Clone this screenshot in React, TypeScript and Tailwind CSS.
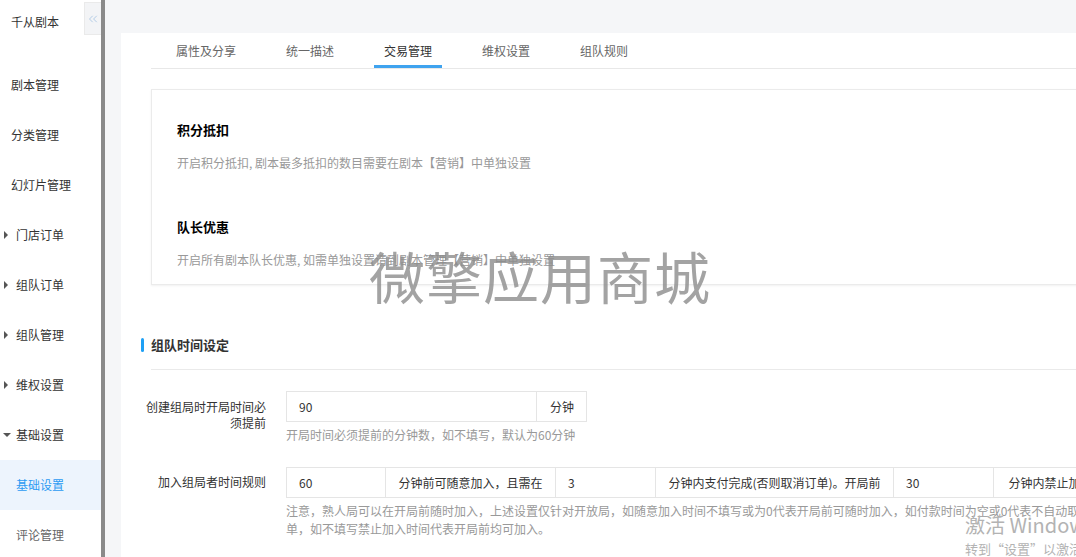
import React from 'react';
import { ChevronsLeft } from 'lucide-react';

const font = { fontFamily: '"Noto Sans CJK SC", "Liberation Sans", sans-serif' };

const menu = [
  { label: '剧本管理' },
  { label: '分类管理' },
  { label: '幻灯片管理' },
  { label: '门店订单', arrow: 'right' },
  { label: '组队订单', arrow: 'right' },
  { label: '组队管理', arrow: 'right' },
  { label: '维权设置', arrow: 'right' },
  { label: '基础设置', arrow: 'down' },
  { label: '基础设置', sub: true, active: true },
  { label: '评论管理', sub: true },
];

const tabs = ['属性及分享', '统一描述', '交易管理', '维权设置', '组队规则'];

function Sidebar() {
  return (
    <aside className="w-[105px] shrink-0 bg-white border-r-[4px] border-[#8a8a8a] relative flex flex-col overflow-hidden">
      <div className="h-[44px] shrink-0 flex items-center pl-[11px] text-[12px] text-[#333]">千从剧本</div>
      <button className="absolute right-0 top-[2px] w-[17px] h-[33px] bg-[#f3f4f6] border border-[#eaeaea] border-r-0 flex items-center justify-center text-[#a9c6e3]">
        <ChevronsLeft size={14} strokeWidth={1.5} />
      </button>
      <nav className="mt-[16px] shrink-0 flex flex-col">
        {menu.map((m, i) => (
          <div
            key={i}
            className={`h-[50px] shrink-0 flex items-center text-[12px] ${m.active ? 'bg-[#edf4fd] text-[#2b9af3]' : m.sub && !m.active ? 'text-[#666]' : 'text-[#333]'} ${m.arrow || m.sub ? 'pl-[16px]' : 'pl-[11px]'} relative`}
          >
            {m.arrow === 'right' && (
              <span className="absolute left-[4px] w-0 h-0 border-y-[4px] border-y-transparent border-l-[4px] border-l-[#555]" />
            )}
            {m.arrow === 'down' && (
              <span className="absolute left-[3px] w-0 h-0 border-x-[4px] border-x-transparent border-t-[4px] border-t-[#555]" />
            )}
            {m.label}
          </div>
        ))}
      </nav>
    </aside>
  );
}

function Tabs() {
  return (
    <div className="mt-[20px] h-[36px] border-b border-[#e8e8e8] flex pl-[15px] gap-[30px]">
      {tabs.map((t, i) => (
        <div
          key={t}
          className={`px-[10px] h-full flex items-center text-[12px] ${i === 2 ? 'text-[#333] border-b-[3px] border-[#3fa3ef] pt-[3px]' : 'text-[#666]'}`}
        >
          {t}
        </div>
      ))}
    </div>
  );
}

function Card() {
  return (
    <div className="mt-[20px] border border-[#ebebeb] shadow-[0_1px_2px_rgba(0,0,0,0.06)] pl-[25px] pt-[30px] pb-[14px]">
      <div className="text-[13px] font-bold text-black leading-[20px]">积分抵扣</div>
      <div className="mt-[13px] text-[12px] text-[#999] leading-[20px]">开启积分抵扣, 剧本最多抵扣的数目需要在剧本【营销】中单独设置</div>
      <div className="mt-[44px] text-[13px] font-bold text-black leading-[20px]">队长优惠</div>
      <div className="mt-[13px] text-[12px] text-[#999] leading-[20px]">开启所有剧本队长优惠, 如需单独设置请到剧本管理【营销】中单独设置</div>
    </div>
  );
}

function Cell({ children, w, addon }: { children: React.ReactNode; w: string; addon?: boolean }) {
  return (
    <div className={`${w} shrink-0 h-full flex items-center border-r border-[#e5e5e5] last:border-r-0 text-[12px] text-[#333] ${addon ? 'justify-center px-[10px] whitespace-nowrap' : 'pl-[12px]'}`}>
      {children}
    </div>
  );
}

function TimeSection() {
  return (
    <div className="mt-[50px]">
      <div className="-ml-[10px] flex items-center h-[20px]">
        <span className="w-[3px] h-[14px] bg-[#1ea0f5] rounded-[2px]" />
        <span className="ml-[7px] text-[13px] font-bold text-[#333]">组队时间设定</span>
      </div>
      <div className="mt-[14px] border-t border-[#eaeaea]" />

      <div className="mt-[21px] flex">
        <div className="-ml-[6px] w-[121px] shrink-0 text-right text-[12px] text-[#333] leading-[16px] pt-[8px]">
          创建组局时开局时间必须提前
        </div>
        <div className="ml-[20px]">
          <div className="flex h-[31px] border border-[#e5e5e5] w-[301px]">
            <Cell w="w-[250px]">90</Cell>
            <Cell w="w-[50px]" addon>分钟</Cell>
          </div>
          <div className="mt-[4px] text-[12px] text-[#999] leading-[18px]">开局时间必须提前的分钟数，如不填写，默认为60分钟</div>
        </div>
      </div>

      <div className="mt-[23px] flex">
        <div className="-ml-[6px] w-[121px] shrink-0 text-right text-[12px] text-[#333] leading-[16px] pt-[7px]">
          加入组局者时间规则
        </div>
        <div className="ml-[20px]">
          <div className="flex h-[31px] border border-[#e5e5e5] w-[820px]">
            <Cell w="w-[99px]">60</Cell>
            <Cell w="w-[170px]" addon>分钟前可随意加入，且需在</Cell>
            <Cell w="w-[100px]">3</Cell>
            <Cell w="w-[238px]" addon>分钟内支付完成(否则取消订单)。开局前</Cell>
            <Cell w="w-[100px]">30</Cell>
            <Cell w="w-[113px]" addon>分钟内禁止加入</Cell>
          </div>
          <div className="mt-[4px] w-[826px] text-[12px] text-[#999] leading-[18px]">
            注意，熟人局可以在开局前随时加入，上述设置仅针对开放局，如随意加入时间不填写或为0代表开局前可随时加入，如付款时间为空或0代表不自动取消订单，如不填写禁止加入时间代表开局前均可加入。
          </div>
        </div>
      </div>
    </div>
  );
}

export default function App() {
  return (
    <div className="h-screen w-full flex overflow-hidden bg-white relative" style={font}>
      <Sidebar />
      <main className="flex-1 bg-[#f5f6f8] pt-[13px] pl-[16px] overflow-hidden">
        <div className="bg-white h-full pl-[30px] w-[1100px]">
          <Tabs />
          <Card />
          <TimeSection />
        </div>
      </main>

      {/* watermark */}
      <div className="absolute left-[369px] top-[243px] text-[56px] leading-[64px] text-[#8c8c8c]/80 tracking-[1px] pointer-events-none">
        微擎应用商城
      </div>
      <div className="absolute left-[965px] top-[512px] text-[#b3b3b3] pointer-events-none whitespace-nowrap">
        <div className="text-[20px] leading-[26px]">激活 Windows</div>
        <div className="text-[13px] leading-[18px] mt-[2px]">转到“设置”以激活 Windows。</div>
      </div>
    </div>
  );
}
